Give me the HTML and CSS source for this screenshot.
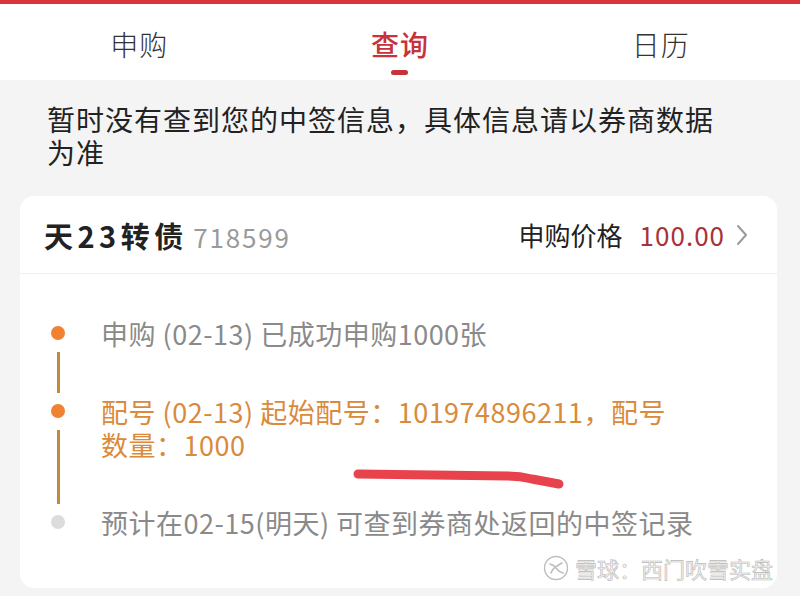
FILE: index.html
```html
<!DOCTYPE html>
<html lang="zh-CN">
<head>
    <meta charset="UTF-8">
    <meta name="viewport" content="width=device-width, initial-scale=1.0">
    <title>中签查询</title>
    <link rel="stylesheet" href="styles.css">
</head>
<body>
    <div class="page">
        <!-- 顶部标签 -->
        <div class="tabs">
            <div class="tab"><span class="tab-label">申购</span></div>
            <div class="tab active"><span class="tab-label">查询</span><span class="tab-bar"></span></div>
            <div class="tab"><span class="tab-label">日历</span></div>
        </div>

        <p class="notice">暂时没有查到您的中签信息，具体信息请以券商数据为准</p>

        <div class="card">
            <div class="card-head">
                <div class="bond">
                    <span class="bond-name">天23转债</span>
                    <span class="bond-code">718599</span>
                </div>
                <div class="price">
                    <span class="price-label">申购价格</span>
                    <span class="price-value">100.00</span>
                    <svg class="chevron" width="12" height="22" viewBox="0 0 12 22">
                        <polyline points="2,2 10,11 2,20" fill="none" stroke="#9a9a9a" stroke-width="2" stroke-linecap="round" stroke-linejoin="round"/>
                    </svg>
                </div>
            </div>

            <ul class="steps">
                <li class="step done">申购 (02-13) 已成功申购1000张</li>
                <li class="step done current">配号 (02-13) 起始配号：101974896211，配号<br>数量：1000</li>
                <li class="step todo">预计在02-15(明天) 可查到券商处返回的中签记录</li>
            </ul>

            <!-- 手画的红线 -->
            <svg class="scribble" width="800" height="400" viewBox="0 0 800 400">
                <path d="M338 278 L488 280 Q500 280 512 283 L539 288" fill="none" stroke="#e8434c" stroke-width="9" stroke-linecap="round" stroke-linejoin="round"/>
            </svg>
        </div>

        <div class="watermark">
            <svg class="wm-logo" width="26" height="26" viewBox="0 0 26 26">
                <circle cx="13" cy="13" r="11.5" fill="#fff" stroke="#bdbdbd" stroke-width="1.4"/>
                <path d="M7 9 Q11 10 13 13 Q16 17 20 18 M8 18 Q10 13 14 11 Q17 9 19 8" fill="none" stroke="#bdbdbd" stroke-width="1.6" stroke-linecap="round"/>
            </svg>
            <span>雪球：西门吹雪实盘</span>
        </div>
    </div>
</body>
</html>
```

FILE: styles.css
```css
body {
    margin: 0;
    padding: 0;
    background-color: #f4f4f4;
    font-family: "Noto Sans CJK SC", "Noto Sans", sans-serif;
    color: #222;
}

.page {
    width: 800px;
    height: 596px;
    overflow: hidden;
    position: relative;
}

.tabs {
    display: grid;
    grid-template-columns: repeat(3, 1fr);
    padding: 0 9px;
    height: 76px;
    background-color: #fff;
    border-top: 4px solid #d8363c;
}

.tab {
    display: flex;
    flex-direction: column;
    align-items: center;
    padding-top: 20px;
}

.tab-label {
    font-size: 28px;
    line-height: 40px;
    font-weight: 300;
    color: #333;
    letter-spacing: 1px;
}

.tab.active .tab-label {
    color: #c8323a;
    font-weight: 500;
}

.tab-bar {
    display: block;
    width: 17px;
    height: 5px;
    margin-top: 6px;
    border-radius: 3px;
    background-color: #c8323a;
}

.notice {
    margin: 0;
    padding: 23px 60px 0 47px;
    font-size: 28px;
    line-height: 33px;
    letter-spacing: 1px;
    color: #222;
}

.card {
    position: relative;
    margin: 27px 23px 0 20px;
    height: 392px;
    background-color: #fff;
    border-radius: 14px;
}

.card-head {
    display: flex;
    align-items: center;
    justify-content: space-between;
    height: 77px;
    padding: 0 29px 0 24px;
    border-bottom: 1px solid #efefef;
}

.bond-name {
    font-size: 29px;
    font-weight: bold;
    color: #222;
    letter-spacing: 4.5px;
}

.bond-code {
    font-size: 26px;
    color: #9a9a9a;
    margin-left: 2px;
    letter-spacing: 1.8px;
}

.price {
    display: flex;
    align-items: center;
}

.price-label {
    font-size: 26px;
    color: #222;
}

.price-value {
    font-size: 26px;
    color: #a8323a;
    margin-left: 17px;
    letter-spacing: 1px;
}

.chevron {
    margin-left: 11px;
}

.steps {
    list-style: none;
    margin: 0;
    padding: 43px 20px 0 81px;
}

.step {
    position: relative;
    font-size: 27px;
    line-height: 33px;
    letter-spacing: 0.5px;
    color: #8a8a8a;
    margin-bottom: 45px;
}

.step::before {
    content: "";
    position: absolute;
    left: -50px;
    top: 9px;
    width: 14px;
    height: 14px;
    border-radius: 50%;
    background-color: #dcdcdc;
}

.step.done::before {
    background-color: #f08232;
}

.step.done::after {
    content: "";
    position: absolute;
    left: -44px;
    top: 35px;
    bottom: -43px;
    width: 3px;
    background-color: #c48a3c;
}

.step.current {
    color: #d98a3a;
}

.scribble {
    position: absolute;
    left: 0;
    top: 0;
    pointer-events: none;
}

.watermark {
    position: absolute;
    left: 543px;
    top: 553px;
    display: flex;
    align-items: center;
    gap: 6px;
    font-size: 22px;
    line-height: 30px;
    color: #f4f4f4;
    -webkit-text-stroke: 0.6px #b8b8b8;
}
```
